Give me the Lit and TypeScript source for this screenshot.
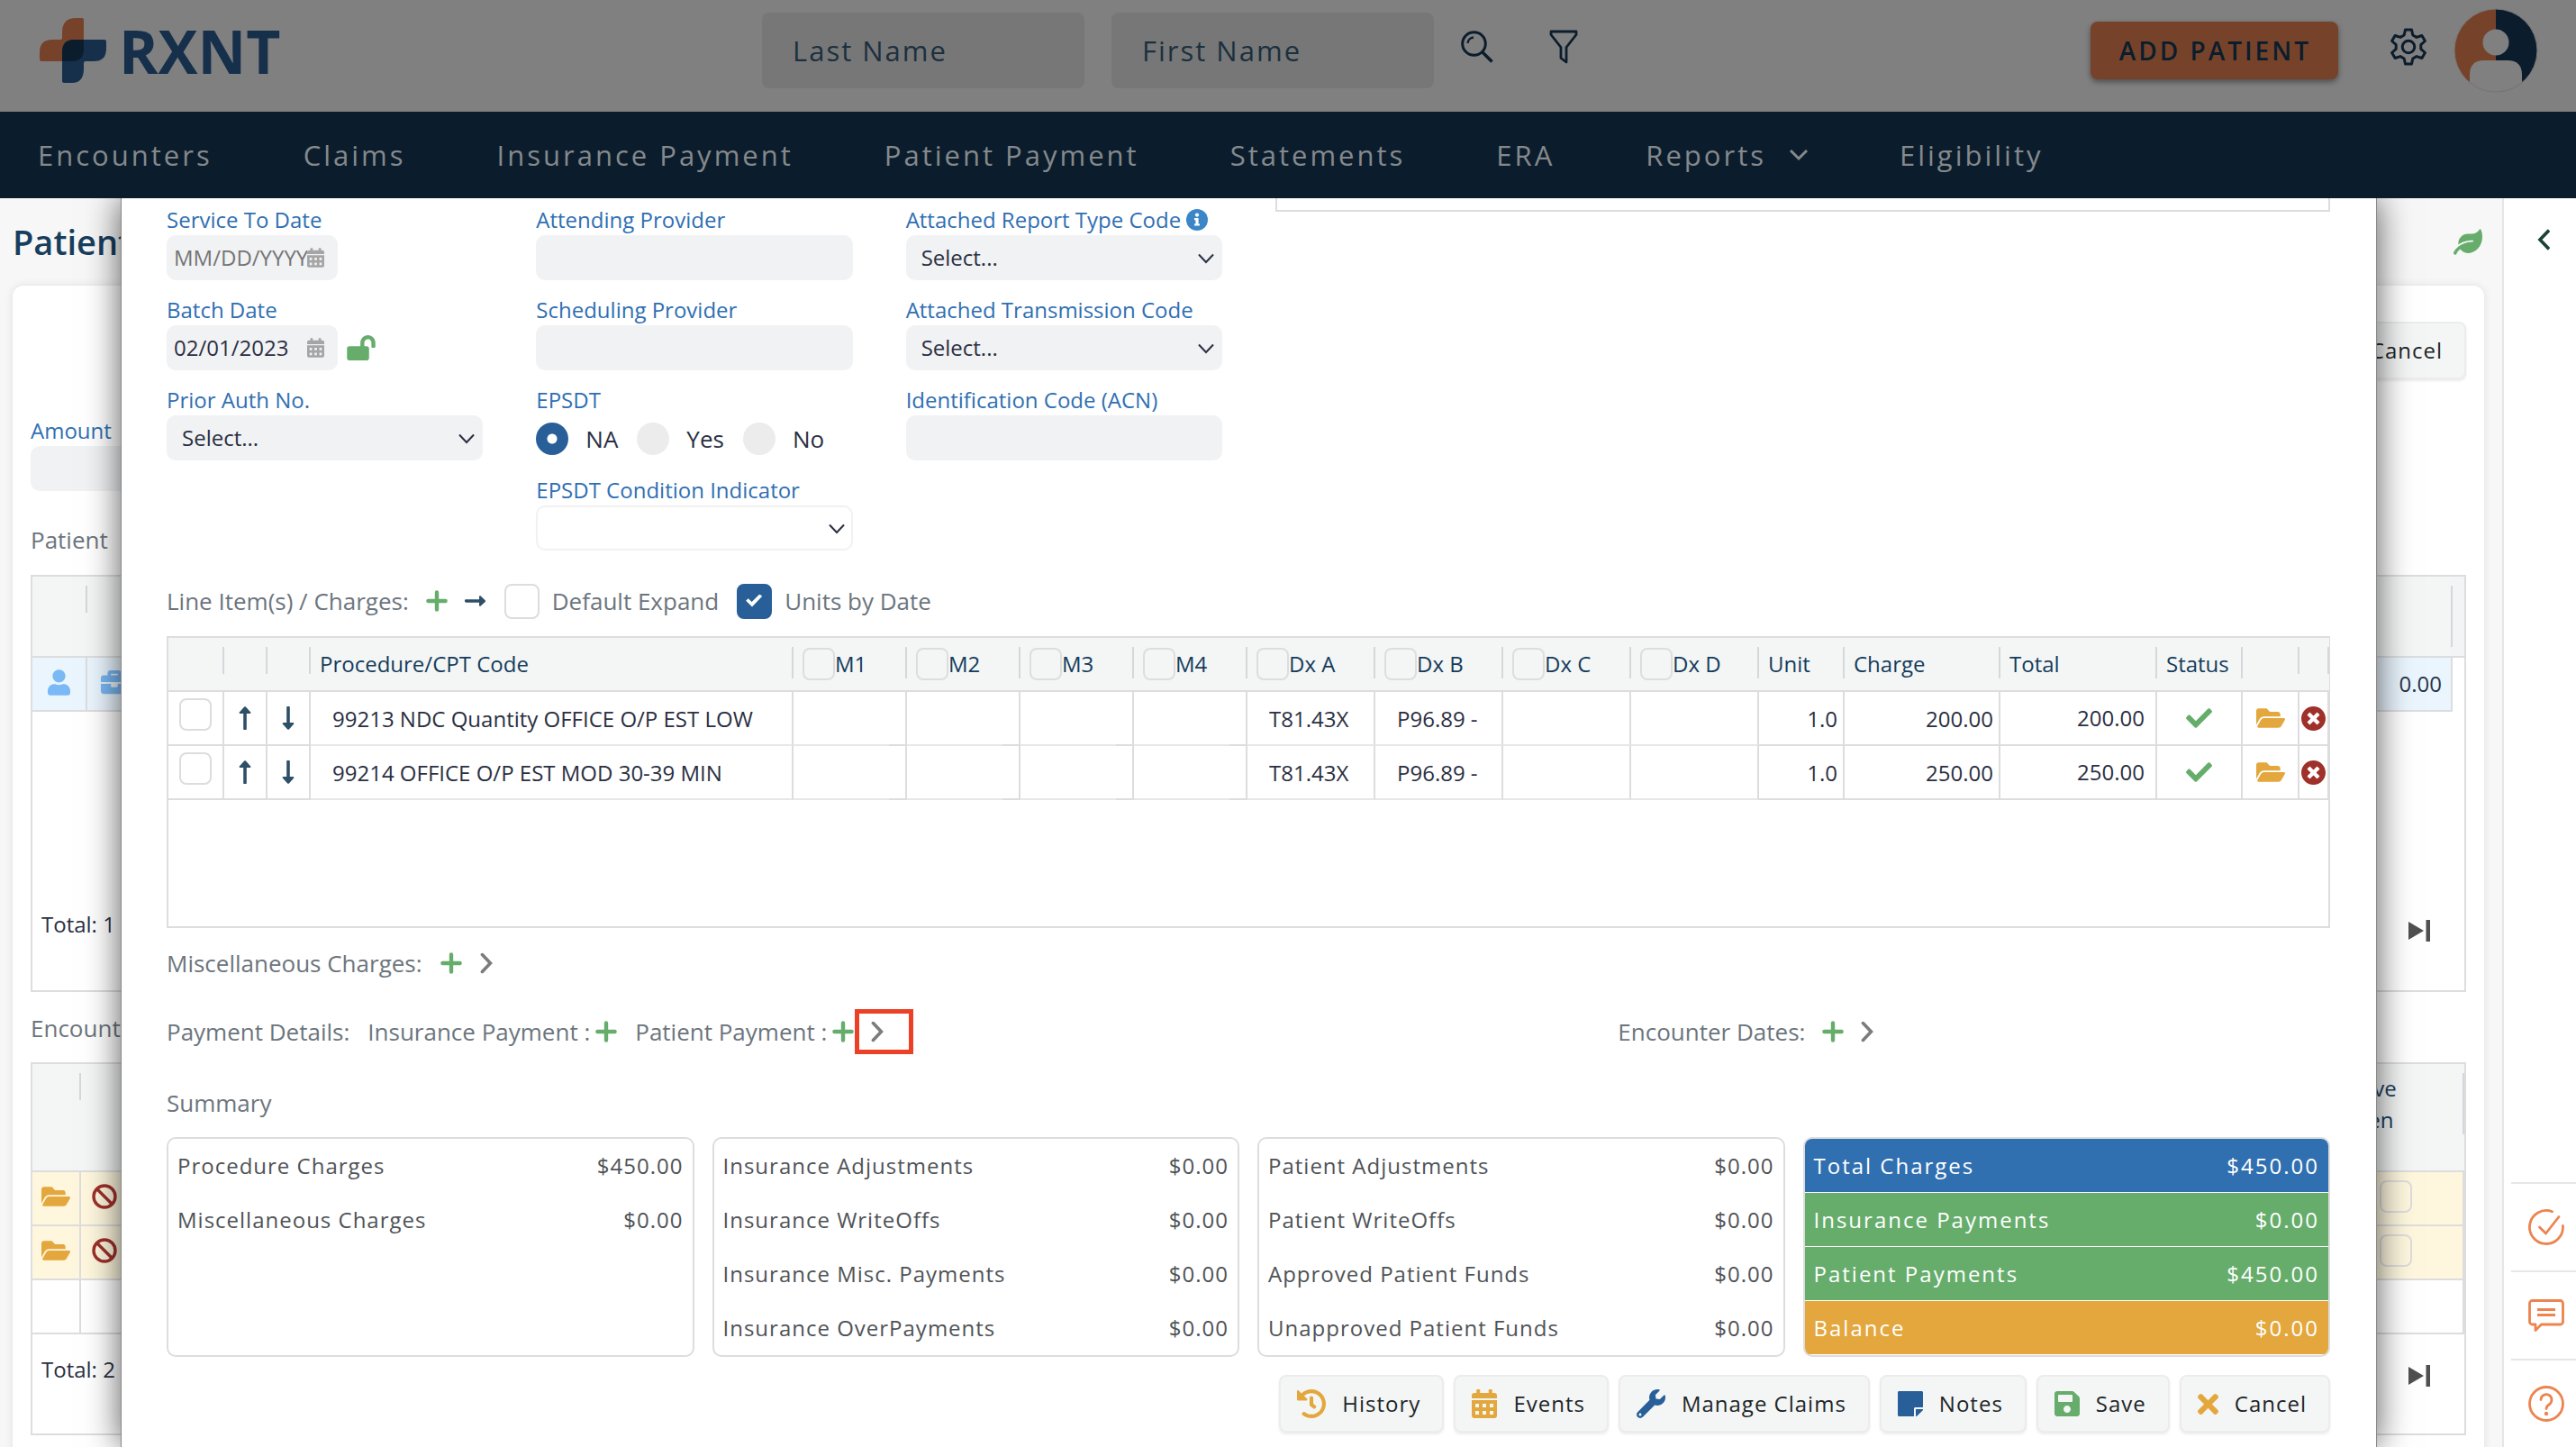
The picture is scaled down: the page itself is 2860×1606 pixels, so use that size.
import { LitElement, html, svg, css, nothing } from "lit";
import { customElement } from "lit/decorators.js";

type Glyph = { box: string; art: unknown };

const calendarArt = svg`<path fill-rule="evenodd" d="M96 0h40a12 12 0 0 1 12 12v52h152V12a12 12 0 0 1 12-12h40a12 12 0 0 1 12 12v52h36a48 48 0 0 1 48 48v48H0v-48a48 48 0 0 1 48-48h36V12a12 12 0 0 1 12-12zM0 192h448v272a48 48 0 0 1-48 48H48a48 48 0 0 1-48-48zM64 256v64h64v-64zM192 256v64h64v-64zM320 256v64h64v-64zM64 384v64h64v-64zM192 384v64h64v-64zM320 384v64h64v-64z"/>`;

const glyphs: Record<string, Glyph> = {
  plus: { box: "0 0 24 24", art: svg`<path fill="none" stroke="currentColor" stroke-width="4.4" stroke-linecap="round" d="M12 2.4v19.2M2.4 12h19.2"/>` },
  chevron: { box: "0 0 14 24", art: svg`<path fill="none" stroke="currentColor" stroke-width="3.6" stroke-linecap="round" d="M2.4 2.6L11.4 12l-9 9.4"/>` },
  back: { box: "0 0 14 24", art: svg`<path fill="none" stroke="currentColor" stroke-width="3.6" d="M13 1.6L3 12l10 10.4"/>` },
  down: { box: "0 0 22 14", art: svg`<path fill="none" stroke="currentColor" stroke-width="3" d="M2 2l9 9 9-9"/>` },
  caret: { box: "0 0 18 12", art: svg`<path fill="none" stroke="currentColor" stroke-width="2" d="M1 1.5l8 8.500 8-8.500"/>` },
  expand: { box: "0 0 24 12", art: svg`<path fill="currentColor" d="M1.500 4.200H16V1.200c0-1 1-1.200 1.700-.6l5 4.600c.5.5.5 1.200 0 1.700l-5 4.600c-.7.6-1.700.3-1.700-.6V7.800H1.500C.6 7.800 0 7.400 0 6.600V5.400c0-.7.600-1.200 1.500-1.200z"/>` },
  up: { box: "0 0 14 26", art: svg`<path fill="currentColor" d="M5.200 25V8H2C.6 8 .2 7 1 6.200L6.200.6c.5-.5 1.200-.5 1.700 0L13 6.200c.8.800.4 1.800-1 1.800H8.800v17c0 .6-.3 1-1 1H6.200c-.7 0-1-.4-1-1z"/>` },
  downArrow: { box: "0 0 14 26", art: svg`<path fill="currentColor" d="M5.200 1v17H2c-1.400 0-1.800 1-1 1.800l5.200 5.600c.5.5 1.200.5 1.700 0L13 19.800c.8-.8.4-1.800-1-1.800H8.800V1c0-.6-.3-1-1-1H6.200c-.7 0-1 .4-1 1z"/>` },
  search: { box: "0 0 36 36", art: svg`<g fill="none" stroke="currentColor" stroke-width="3"><circle cx="14.500" cy="14.500" r="12.800"/><path d="M23.500 23.500l11 11" stroke-width="3.600"/><path d="M7.500 14a7 7 0 0 1 6.500-6.500" stroke-width="2.400"/></g>` },
  filter: { box: "0 0 32 38", art: svg`<path fill="none" stroke="currentColor" stroke-width="2.800" stroke-linejoin="round" d="M2 2h28v3.500L19 19.500V36l-6-4.500v-12L2 5.500z"/>` },
  gear: { box: "0 0 40 42", art: svg`<g fill="none" stroke="currentColor" stroke-width="3" stroke-linejoin="round"><path d="M16.500 2h7l1.300 6 4.200 2.400 5.900-1.900 3.500 6-4.600 4.100v4.800l4.600 4.100-3.500 6-5.900-1.900-4.200 2.400-1.300 6h-7l-1.300-6-4.200-2.400-5.900 1.900-3.500-6 4.600-4.100v-4.800l-4.600-4.100 3.500-6 5.900 1.900L15.200 8z"/><circle cx="20" cy="21" r="6.800"/></g>` },
  user: { box: "0 0 448 512", art: svg`<path fill="currentColor" d="M224 256c70.700 0 128-57.300 128-128S294.700 0 224 0 96 57.300 96 128s57.300 128 128 128zm89.600 32h-16.700c-22.200 10.200-46.900 16-72.900 16s-50.600-5.800-72.900-16h-16.700C60.200 288 0 348.200 0 422.400V464c0 26.500 21.500 48 48 48h352c26.500 0 48-21.500 48-48v-41.600c0-74.200-60.200-134.400-134.400-134.400z"/>` },
  briefcase: { box: "0 0 512 512", art: svg`<path fill="currentColor" d="M320 336c0 8.840-7.160 16-16 16h-96c-8.840 0-16-7.160-16-16v-48H0v144c0 25.600 22.400 48 48 48h416c25.600 0 48-22.400 48-48V288H320v48zm144-208h-80V80c0-25.600-22.400-48-48-48H176c-25.600 0-48 22.400-48 48v48H48c-25.600 0-48 22.400-48 48v80h512v-80c0-25.600-22.400-48-48-48zm-144 0H192V96h128v32z"/>` },
  leaf: { box: "0 0 576 512", art: svg`<path fill="currentColor" d="M546.200 9.700c-5.600-12.500-21.600-13-28.300-1.200C486.900 62.400 431.400 96 368 96h-80C182 96 96 182 96 288c0 7 .8 13.700 1.500 20.500C161.300 262.800 253.400 224 384 224c8.800 0 16 7.200 16 16s-7.200 16-16 16C132.600 256 26 410.100 2.400 468c-6.600 16.300 1.200 34.900 17.500 41.600 16.400 6.800 35-1.100 41.800-17.300 1.500-3.600 20.900-47.900 71.900-90.600 32.400 43.900 94 85.800 174.900 77.200C465.500 467.500 576 326.700 576 154.300c0-50.200-10.800-102.200-29.800-144.600z"/>` },
  lockOpen: { box: "0 0 576 512", art: svg`<path fill="currentColor" d="M423.500 0C339.500.3 272 69.500 272 153.500V224H48c-26.500 0-48 21.500-48 48v192c0 26.500 21.500 48 48 48h352c26.500 0 48-21.500 48-48V272c0-26.500-21.500-48-48-48h-48v-71.100c0-39.600 31.700-72.500 71.300-72.900 40-.4 72.700 32.100 72.700 72v80c0 13.300 10.700 24 24 24h32c13.300 0 24-10.700 24-24v-80C576 68 507.500-.3 423.500 0z"/>` },
  folder: { box: "0 64 576 384", art: svg`<path fill="currentColor" d="M572.694 292.093L500.270 416.248A63.997 63.997 0 0 1 444.989 448H45.025c-18.523 0-30.064-20.093-20.731-36.093l72.424-124.155A64 64 0 0 1 152 256h399.964c18.523 0 30.064 20.093 20.730 36.093zM152 224h328v-48c0-26.510-21.490-48-48-48H272l-64-64H48C21.490 64 0 85.490 0 112v278.046l69.077-118.418C86.214 242.250 117.989 224 152 224z"/>` },
  check: { box: "0 65 512 382", art: svg`<path fill="currentColor" d="M173.898 439.404l-166.400-166.400c-9.997-9.997-9.997-26.206 0-36.204l36.203-36.204c9.997-9.998 26.207-9.998 36.204 0L192 312.690 432.095 72.596c9.997-9.997 26.207-9.997 36.204 0l36.203 36.204c9.997 9.997 9.997 26.206 0 36.204l-294.400 294.401c-9.998 9.997-26.207 9.997-36.204-.001z"/>` },
  remove: { box: "8 8 496 496", art: svg`<path fill="currentColor" d="M256 8C119 8 8 119 8 256s111 248 248 248 248-111 248-248S393 8 256 8zm121.600 313.100c4.700 4.700 4.700 12.300 0 17L338 377.600c-4.700 4.700-12.300 4.700-17 0L256 312l-65.100 65.600c-4.700 4.700-12.300 4.700-17 0L134.400 338c-4.700-4.700-4.700-12.300 0-17l65.600-65-65.600-65.100c-4.700-4.700-4.700-12.300 0-17l39.600-39.600c4.700-4.700 12.300-4.700 17 0l65 65.700 65.100-65.600c4.700-4.700 12.300-4.700 17 0l39.600 39.600c4.700 4.700 4.700 12.300 0 17L312 256l65.600 65.100z"/>` },
  ban: { box: "0 0 28 28", art: svg`<g fill="none" stroke="currentColor" stroke-width="3.400"><circle cx="14" cy="14" r="12"/><path d="M5.500 5.500l17 17"/></g>` },
  info: { box: "0 0 24 24", art: svg`<circle cx="12" cy="12" r="12" fill="currentColor"/><circle cx="12" cy="6.600" r="2.100" fill="#fff"/><path fill="#fff" d="M9 10h4.600v6.400H15v2.200H9v-2.200h1.400v-4.200H9z"/>` },
  calendar: { box: "0 0 448 512", art: svg`<g fill="currentColor">${calendarArt}</g>` },
  history: { box: "8 8 496 496", art: svg`<path fill="currentColor" d="M504 255.531c.253 136.640-111.180 248.372-247.820 248.468-59.015.042-113.223-20.530-155.822-54.911-11.077-8.940-11.905-25.541-1.839-35.607l11.267-11.267c8.609-8.609 22.353-9.551 31.891-1.984C173.062 425.135 212.781 440 256 440c101.705 0 184-82.311 184-184 0-101.705-82.311-184-184-184-48.814 0-93.149 18.969-126.068 49.932l50.754 50.754c10.080 10.080 2.941 27.314-11.313 27.314H24c-8.837 0-16-7.163-16-16V38.627c0-14.254 17.234-21.393 27.314-11.314l49.372 49.372C129.209 34.136 189.552 8 256 8c136.810 0 247.747 110.780 248 247.531zm-180.912 78.784l9.823-12.630c8.138-10.463 6.253-25.542-4.210-33.679L288 256.349V152c0-13.255-10.745-24-24-24h-16c-13.255 0-24 10.745-24 24v135.651l65.409 50.874c10.463 8.137 25.541 6.253 33.679-4.210z"/>` },
  wrench: { box: "0 0 512 512", art: svg`<path fill="currentColor" d="M507.730 109.100c-2.240-9.030-13.540-12.090-20.120-5.510l-74.360 74.360-67.880-11.310-11.310-67.880 74.360-74.360c6.620-6.620 3.430-17.900-5.660-20.160-47.380-11.740-99.550.91-136.580 37.930-39.640 39.640-50.550 97.100-34.050 147.200L18.740 402.760c-24.990 24.990-24.990 65.510 0 90.500 24.990 24.990 65.510 24.990 90.500 0l213.210-213.210c50.120 16.710 107.470 5.680 147.370-34.220 37.070-37.070 49.700-89.320 37.910-136.730zM64 472c-13.250 0-24-10.750-24-24 0-13.260 10.750-24 24-24s24 10.740 24 24c0 13.250-10.750 24-24 24z"/>` },
  note: { box: "0 32 448 448", art: svg`<path fill="currentColor" d="M312 320h136V56c0-13.300-10.700-24-24-24H24C10.700 32 0 42.700 0 56v400c0 13.300 10.700 24 24 24h264V344c0-13.200 10.800-24 24-24zm129 55l-98 98c-4.500 4.500-10.600 7-17 7h-6V352h128v6.100c0 6.300-2.500 12.400-7 16.900z"/>` },
  save: { box: "0 32 448 448", art: svg`<path fill="currentColor" d="M433.941 129.941l-83.882-83.882A48 48 0 0 0 316.118 32H48C21.490 32 0 53.490 0 80v352c0 26.510 21.490 48 48 48h352c26.510 0 48-21.490 48-48V163.882a48 48 0 0 0-14.059-33.941zM224 416c-35.346 0-64-28.654-64-64 0-35.346 28.654-64 64-64s64 28.654 64 64c0 35.346-28.654 64-64 64zm96-304.520V212c0 6.627-5.373 12-12 12H76c-6.627 0-12-5.373-12-12V108c0-6.627 5.373-12 12-12h228.520c3.183 0 6.235 1.264 8.485 3.515l3.480 3.480A11.996 11.996 0 0 1 320 111.480z"/>` },
  times: { box: "0 80 352 352", art: svg`<path fill="currentColor" d="M242.720 256l100.070-100.070c12.280-12.280 12.280-32.190 0-44.480l-22.240-22.240c-12.280-12.280-32.190-12.280-44.480 0L176 189.280 75.930 89.210c-12.280-12.280-32.190-12.280-44.480 0L9.210 111.450c-12.280 12.280-12.280 32.190 0 44.480L109.280 256 9.210 356.070c-12.280 12.280-12.280 32.190 0 44.480l22.240 22.240c12.280 12.280 32.200 12.280 44.480 0L176 322.720l100.070 100.070c12.280 12.280 32.200 12.280 44.480 0l22.240-22.240c12.280-12.280 12.280-32.190 0-44.480L242.720 256z"/>` },
  last: { box: "0 0 24 24", art: svg`<path fill="currentColor" d="M0 2l17 10L0 22zM19.500 0H24v24h-4.500z"/>` },
  task: { box: "0 0 40 40", art: svg`<g fill="none" stroke="currentColor" stroke-width="2.800" stroke-linecap="round"><path d="M38.400 18.500A18.500 18.500 0 1 1 26.500 2.700"/><path d="M12.500 20l7 7L34 8.500"/></g>` },
  message: { box: "0 0 40 36", art: svg`<path fill="none" stroke="currentColor" stroke-width="2.800" stroke-linejoin="round" d="M4.500 1.500h31a3 3 0 0 1 3 3V25a3 3 0 0 1-3 3H14.500L8 34.500V28H4.500a3 3 0 0 1-3-3V4.500a3 3 0 0 1 3-3z"/><path stroke="currentColor" stroke-width="3.200" d="M10 11.500h20M10 17.500h20"/>` },
  help: { box: "0 0 40 40", art: svg`<g fill="none" stroke="currentColor" stroke-width="2.800" stroke-linecap="round"><circle cx="20" cy="20" r="18.500"/><path d="M14 15.500a6 6 0 1 1 9.500 5c-2.500 1.700-3.500 2.600-3.500 5"/></g><circle cx="20" cy="31" r="2.200" fill="currentColor"/>` },
};

const icon = (name: string, width: number, height: number, tone = "") => html`
  <svg class="icon ${tone}" width=${width} height=${height} viewBox=${glyphs[name].box} aria-hidden="true">${glyphs[name].art}</svg>`;

const shared = css`
  * { box-sizing: border-box; }
  :host { font-family: "Open Sans", "Noto Sans", sans-serif; font-size: 24px; line-height: 32px; color: #2b2f42; }
  .icon { display: block; flex: none; }
  .green { color: #66ad6c; }
  .amber { color: #e3a73d; }
  .blue { color: #285f98; }
  .red { color: #9f302a; }
  .slate { color: #2e4f68; }
  .grey { color: #7c7c7c; }
  button, input, select { font: inherit; color: inherit; margin: 0; }
  button { border: 0; padding: 0; background: none; cursor: pointer; }
  .section { margin: 0; font-size: 26px; line-height: 40px; font-weight: 400; color: #6c757d; }
  .control { display: block; width: 100%; height: 50px; border: 0; border-radius: 10px; background: #f1f2f4; outline: none; }
  .label { display: flex; align-items: center; gap: 6px; height: 32px; color: #2f6fb2; line-height: 30px; padding-bottom: 2px; white-space: nowrap; }
  .tick { appearance: none; display: block; flex: none; width: 36px; height: 36px; border: 2px solid #dddddd; border-radius: 8px; background: transparent; }
  .action { display: flex; align-items: center; gap: 18px; height: 64px; padding: 0 24px 0 18px; border: 2px solid #ececec; border-radius: 8px; background: #f4f6f5; box-shadow: 0 2px 3px rgba(0, 0, 0, 0.08); color: #212529; letter-spacing: 1px; }
  table { border-collapse: separate; border-spacing: 0; table-layout: fixed; width: 100%; }
  th, td { padding: 0; font-weight: 400; text-align: left; overflow: hidden; white-space: nowrap; }
`;

@customElement("site-header")
export class SiteHeader extends LitElement {
  static styles = [shared, css`
    :host { display: block; flex: none; }
    .bar { display: flex; align-items: center; height: 124px; padding: 0 42px 12px 44px; background: #808080; color: #0b1d2c; }
    .brand { display: flex; align-items: center; gap: 14px; flex: 0 1 802px; font-size: 66px; line-height: 72px; font-weight: 700; color: #16304b; text-decoration: none; }
    .query { width: 358px; height: 84px; margin-right: 30px; padding: 0 34px; border: 0; border-radius: 8px; background: #777777; font-size: 31px; letter-spacing: 2px; }
    .query::placeholder { color: #1b303f; opacity: 1; }
    .tool { padding-bottom: 8px; }
    .tools { display: flex; gap: 62px; }
    .right { display: flex; align-items: center; margin-left: auto; }
    .add { height: 64px; padding: 0 30px 0 32px; border-radius: 8px; background: #76432a; box-shadow: 0 3px 6px rgba(0, 0, 0, 0.4); font-size: 28px; font-weight: 600; letter-spacing: 3px; }
    .settings { margin: 0 30px 0 58px; }
    .nav { display: flex; align-items: center; gap: 101px; height: 96px; padding: 0 42px; background: #0b1d2c; }
    .link { display: flex; align-items: center; gap: 25px; color: #85898c; font-size: 31px; letter-spacing: 3px; text-decoration: none; white-space: nowrap; }
  `];

  render() {
    const links = ["Encounters", "Claims", "Insurance Payment", "Patient Payment", "Statements", "ERA", "Reports", "Eligibility"];
    return html`
      <header class="bar">
        <a class="brand" href="#home">
          <svg class="icon" width="74" height="72" viewBox="0 0 74 72" aria-hidden="true">
            <path fill="#76432a" d="M0 46V38Q0 24 14 24H23Q25 24 25 22V16Q25 0 40 0H47Q49 0 49 2V34Q49 48 36 48H2Q0 48 0 46Z"/>
            <path fill="#16304b" d="M25 38Q25 24 38 24H72Q74 24 74 26V34Q74 48 60 48H51Q49 48 49 50V56Q49 72 36 72H27Q25 72 25 70Z"/>
            <path fill="#0b1d2c" d="M25 38Q25 24 38 24H47Q49 24 49 26V34Q49 48 36 48H25Z"/>
          </svg>
          RXNT
        </a>
        <input class="query" type="text" placeholder="Last Name" aria-label="Last Name">
        <input class="query" type="text" placeholder="First Name" aria-label="First Name">
        <div class="tools">
          <button class="tool" aria-label="Search">${icon("search", 36, 36)}</button>
          <button class="tool" aria-label="Filter">${icon("filter", 32, 38)}</button>
        </div>
        <div class="right">
          <button class="add">ADD PATIENT</button>
          <button class="tool settings" aria-label="Settings">${icon("gear", 40, 42)}</button>
          <button aria-label="Account">
            <svg class="icon" width="94" height="94" viewBox="0 0 94 94" aria-hidden="true">
              <clipPath id="disc"><circle cx="47" cy="47" r="46"/></clipPath>
              <g clip-path="url(#disc)">
                <rect width="47" height="94" fill="#76432a"/>
                <rect x="47" width="47" height="94" fill="#0b1d2c"/>
                <circle cx="47" cy="38" r="14.500" fill="#808080"/>
                <path fill="#808080" d="M18 94V74Q18 58 34 58H60Q76 58 76 74V94Z"/>
              </g>
              <circle cx="47" cy="47" r="46" fill="none" stroke="#777777"/>
            </svg>
          </button>
        </div>
      </header>
      <nav class="nav">
        ${links.map((text) => html`<a class="link" href="#${text}">${text}${text === "Reports" ? icon("down", 22, 14) : nothing}</a>`)}
      </nav>`;
  }
}

@customElement("patient-page")
export class PatientPage extends LitElement {
  static styles = [shared, css`
    :host { display: flex; }
    .workspace { flex: 1; min-width: 0; display: flex; flex-direction: column; padding: 0 20px 0 14px; background: #f7f7f7; border-right: 2px solid #e6e6e6; }
    .title-row { display: flex; flex: none; align-items: center; justify-content: space-between; height: 97px; padding-right: 2px; }
    .title { margin: 0; font-size: 38px; line-height: 48px; padding-bottom: 2px; font-weight: 600; color: #183e5e; }
    .card { flex: 1; padding: 40px 20px 0; border-radius: 12px 12px 0 0; background: #ffffff; box-shadow: 0 0 10px rgba(0, 0, 0, 0.1); }
    .toolbar { display: flex; justify-content: flex-end; margin-bottom: 42px; }
    .amount { width: 350px; margin-bottom: 34px; }
    .grid { display: flex; flex-direction: column; justify-content: space-between; margin: 19px 0 20px; border: 2px solid #dddddd; }
    .patients { height: 463px; }
    .encounters { height: 414px; margin-top: 18px; }
    th { background: linear-gradient(#d5d7da, #d5d7da) no-repeat right top 10px / 2px 30px #f4f5f5; border-bottom: 2px solid #dddddd; color: #183e5e; vertical-align: top; }
    .patients th { height: 90px; }
    .encounters th { height: 120px; }
    .tall { background-size: 2px 68px; }
    .wrap { padding: 9px 10px; line-height: 35px; white-space: normal; }
    .gutter { background: #f3f4f6; }
    td { height: 60px; border-right: 2px solid #dddddd; border-bottom: 2px solid #dddddd; vertical-align: middle; }
    td .icon, td .tick { margin: 0 auto 4px; }
    .picked td { background: #eaf5fe; color: #2b3446; }
    .picked .none, .none { border: 0; background: none; }
    .sky { color: #7ab9f5; }
    .marked td { background: #fef7de; }
    .money { padding-right: 10px; text-align: right; }
    .foot { display: flex; justify-content: space-between; height: 112px; padding: 23px 38px 0 10px; }
    .next { align-self: flex-start; padding-top: 11px; color: #505050; }
    .side { display: flex; flex: none; flex-direction: column; width: 80px; padding-left: 8px; background: #ffffff; color: #ec8450; }
    .fold { align-self: center; margin-top: 34px; color: #1b4433; }
    .fill { flex: 1; }
    .shortcut { display: flex; align-items: center; justify-content: center; height: 98px; padding-left: 6px; border-top: 2px solid #e6e6e6; }
  `];

  render() {
    return html`
      <main class="workspace">
        <div class="title-row"><h1 class="title">Patient</h1>${icon("leaf", 32, 29, "green")}</div>
        <section class="card">
          <div class="toolbar"><button class="action">Cancel</button></div>
          <div class="amount">
            <label class="label" for="amount">Amount</label>
            <input class="control" id="amount" type="text">
          </div>
          <h2 class="section">Patient</h2>
          <div class="grid patients">
            <table>
              <colgroup><col style="width:61px"><col style="width:61px"><col><col style="width:180px"><col style="width:13px"></colgroup>
              <thead><tr><th></th><th></th><th></th><th class="tall"></th><th class="gutter"></th></tr></thead>
              <tbody><tr class="picked">
                <td>${icon("user", 25, 29, "sky")}</td><td>${icon("briefcase", 30, 30, "sky")}</td><td></td><td class="money">0.00</td><td class="none"></td>
              </tr></tbody>
            </table>
            <div class="foot"><span>Total: 1</span><button class="next" aria-label="Last page">${icon("last", 24, 24)}</button></div>
          </div>
          <h2 class="section">Encounters</h2>
          <div class="grid encounters">
            <table>
              <colgroup><col style="width:54px"><col style="width:54px"><col><col style="width:150px"></colgroup>
              <thead><tr><th></th><th></th><th></th><th class="tall wrap">Leave<br>Open</th></tr></thead>
              <tbody>
                ${[1, 2].map((row) => html`<tr class="marked">
                  <td>${icon("folder", 32, 22, "amber")}</td><td>${icon("ban", 28, 28, "red")}</td><td></td>
                  <td><input class="tick" type="checkbox" aria-label="Leave open ${row}"></td>
                </tr>`)}
                <tr><td></td><td></td><td></td><td></td></tr>
              </tbody>
            </table>
            <div class="foot"><span>Total: 2</span><button class="next" aria-label="Last page">${icon("last", 24, 24)}</button></div>
          </div>
        </section>
      </main>
      <aside class="side">
        <button class="fold" aria-label="Expand panel">${icon("back", 14, 24)}</button>
        <div class="fill"></div>
        <button class="shortcut" aria-label="Tasks">${icon("task", 40, 40)}</button>
        <button class="shortcut" aria-label="Messages">${icon("message", 40, 36)}</button>
        <button class="shortcut" aria-label="Help">${icon("help", 40, 40)}</button>
      </aside>`;
  }
}

const modifiers = ["M1", "M2", "M3", "M4"];
const diagnoses = ["Dx A", "Dx B", "Dx C", "Dx D"];
const columnWidths = [62, 48, 48, 536, 126, 126, 126, 126, 142, 142, 142, 142, 95, 173, 174, 95, 63, 33];

const charges = [
  { code: "99213 NDC Quantity OFFICE O/P EST LOW", dx: ["T81.43X", "P96.89 -", "", ""], unit: "1.0", amount: "200.00" },
  { code: "99214 OFFICE O/P EST MOD 30-39 MIN", dx: ["T81.43X", "P96.89 -", "", ""], unit: "1.0", amount: "250.00" },
];

const summary = [
  [["Procedure Charges", "$450.00"], ["Miscellaneous Charges", "$0.00"]],
  [["Insurance Adjustments", "$0.00"], ["Insurance WriteOffs", "$0.00"], ["Insurance Misc. Payments", "$0.00"], ["Insurance OverPayments", "$0.00"]],
  [["Patient Adjustments", "$0.00"], ["Patient WriteOffs", "$0.00"], ["Approved Patient Funds", "$0.00"], ["Unapproved Patient Funds", "$0.00"]],
];

const totals = [
  ["Total Charges", "$450.00", "charge"],
  ["Insurance Payments", "$0.00", "paid"],
  ["Patient Payments", "$450.00", "paid"],
  ["Balance", "$0.00", "due"],
];

@customElement("encounter-dialog")
export class EncounterDialog extends LitElement {
  static styles = [shared, css`
    :host { display: block; padding: 0 51px 0 50px; border: 1px solid #8a8a8a; border-width: 0 1px; background: #ffffff; box-shadow: 0 0 36px rgba(0, 0, 0, 0.65); overflow: hidden; }
    .form { display: grid; grid-template-columns: 3fr 3fr 3fr 10fr; gap: 59px; }
    .stack { display: flex; flex-direction: column; gap: 18px; padding-top: 9px; min-width: 0; }
    .panel { height: 15px; border: 2px solid #dddddd; border-top: 0; }
    .text { padding: 0 12px; }
    .pick { position: relative; display: block; }
    .pick .control { appearance: none; padding: 0 40px 0 17px; }
    .pick .icon { position: absolute; right: 9px; top: 20px; pointer-events: none; }
    .outlined { border: 2px solid #f1f1f1; background: #ffffff; }
    .line { display: flex; align-items: center; gap: 10px; }
    .date { display: flex; align-items: center; width: 190px; height: 50px; padding: 0 15px 0 8px; border-radius: 10px; background: #f1f2f4; }
    .date input { flex: 1; min-width: 0; width: 0; padding: 0; border: 0; background: none; outline: none; }
    .date input::placeholder { color: #757575; opacity: 1; }
    .mist { color: #a5a5a5; }
    .sky { color: #3b86c8; }
    .choices { display: flex; align-items: center; height: 50px; padding-top: 2px; font-size: 26px; }
    .choice { display: flex; align-items: center; gap: 19px; margin-right: 21px; }
    .radio { appearance: none; width: 36px; height: 36px; border-radius: 50%; background: #ececec; }
    .radio:checked { background: radial-gradient(#ffffff 5px, #285f98 6px); }
    .heading { display: flex; align-items: center; height: 40px; color: #6c757d; font-size: 26px; white-space: nowrap; }
    .items { margin-top: 36px; }
    .items .icon { margin-left: 19px; }
    .option { display: flex; align-items: center; gap: 14px; margin-left: 20px; }
    .option .tick { width: 39px; height: 39px; }
    .tick:checked { border-color: #285f98; background: #285f98; }
    .tick:checked::before { content: ""; display: block; width: 18px; height: 14px; margin: 10px 8px; background: #ffffff; clip-path: polygon(0 52%, 14% 34%, 36% 60%, 84% 0, 100% 16%, 38% 100%); }
    .ledger { min-height: 324px; margin-top: 19px; border: 2px solid #dddddd; }
    th { height: 60px; padding-left: 10px; border-bottom: 2px solid #dddddd; background: linear-gradient(#d5d7da, #d5d7da) no-repeat right top 10px / 2px 35px #f4f6f5; color: #153c5c; }
    .short { background-size: 2px 30px; }
    .head-tick { display: flex; align-items: center; }
    td { height: 60px; border-right: 2px solid #dddddd; border-bottom: 2px solid #dddddd; }
    td .icon, td button { margin: 0 auto; display: block; }
    td .tick { margin: 0 auto 8px; }
    .editable { border-bottom-color: #e7e7e7; }
    .notched { border-bottom: 0; background: linear-gradient(#dddddd, #dddddd) no-repeat right bottom / 18px 2px, linear-gradient(#e7e7e7, #e7e7e7) no-repeat left bottom / 100% 2px; }
    .cell { display: block; width: 100%; height: 56px; padding: 0 24px; border: 0; background: none; outline: none; }
    .number { padding: 0 6px; text-align: right; }
    .total { padding-right: 12px; text-align: right; }
    .misc { margin-top: 19px; gap: 20px; }
    .payments { display: grid; grid-template-columns: 2fr 1fr; margin-top: 31px; }
    .payments .heading { height: 50px; }
    .part { display: flex; align-items: center; gap: 6px; margin-left: 20px; }
    .flagged { display: flex; align-items: center; width: 65px; height: 50px; margin-left: 1px; padding-left: 13px; border: 5px solid #ec4126; }
    .dates { gap: 19px; padding-left: 10px; }
    .section { margin-top: 34px; }
    .boxes { display: grid; grid-template-columns: repeat(4, 1fr); gap: 20px; margin-top: 18px; }
    .box { margin: 0; border: 2px solid #dddddd; border-radius: 10px; overflow: hidden; letter-spacing: 1px; color: #4f5357; }
    .entry { display: flex; align-items: center; justify-content: space-between; height: 60px; padding: 0 10px; }
    .entry dd { margin: 0; }
    .tinted { color: #ffffff; letter-spacing: 2px; }
    .tinted .entry { border-bottom: 1px solid #ffffff; }
    .charge { background: #306fb0; }
    .paid { background: #66ad6c; }
    .due { background: #e3a73d; }
    .actions { display: flex; justify-content: flex-end; gap: 11px; margin-top: 20px; }
  `];

  private input(id: string, label: string) {
    return html`<div><label class="label" for=${id}>${label}</label><input class="control text" id=${id} type="text"></div>`;
  }

  private select(id: string, label: string, value = "Select...", tone = "", hint: unknown = nothing) {
    return html`<div>
      <label class="label" for=${id}>${label}${hint}</label>
      <span class="pick"><select class="control ${tone}" id=${id}><option>${value}</option></select>${icon("caret", 18, 12)}</span>
    </div>`;
  }

  private date(id: string, label: string, value: string, extra: unknown = nothing) {
    return html`<div>
      <label class="label" for=${id}>${label}</label>
      <div class="line">
        <span class="date"><input id=${id} type="text" placeholder="MM/DD/YYYY" .value=${value}>${icon("calendar", 19, 22, "mist")}</span>
        ${extra}
      </div>
    </div>`;
  }

  private add(label: string) {
    return html`<button aria-label=${label}>${icon("plus", 24, 24, "green")}</button>`;
  }

  private tickHead(text: string) {
    return html`<th><label class="head-tick"><input class="tick" type="checkbox">${text}</label></th>`;
  }

  private action(text: string, name: string, w: number, h: number, tone: string) {
    return html`<button class="action">${icon(name, w, h, tone)}${text}</button>`;
  }

  render() {
    return html`
      <div class="form">
        <div class="stack">
          ${this.date("to-date", "Service To Date", "")}
          ${this.date("batch-date", "Batch Date", "02/01/2023", icon("lockOpen", 32, 28, "green"))}
          ${this.select("prior-auth", "Prior Auth No.")}
        </div>
        <div class="stack">
          ${this.input("attending", "Attending Provider")}
          ${this.input("scheduling", "Scheduling Provider")}
          <div role="radiogroup" aria-labelledby="epsdt">
            <span class="label" id="epsdt">EPSDT</span>
            <div class="choices">
              ${["NA", "Yes", "No"].map((text) => html`<label class="choice"><input class="radio" type="radio" name="epsdt" ?checked=${text === "NA"}>${text}</label>`)}
            </div>
          </div>
          ${this.select("condition", "EPSDT Condition Indicator", "", "outlined")}
        </div>
        <div class="stack">
          ${this.select("report-type", "Attached Report Type Code", "Select...", "", icon("info", 24, 24, "sky"))}
          ${this.select("transmission", "Attached Transmission Code")}
          ${this.input("acn", "Identification Code (ACN)")}
        </div>
        <div class="panel"></div>
      </div>

      <div class="heading items">
        Line Item(s) / Charges:
        ${this.add("Add line item")}
        <button aria-label="Expand line items">${icon("expand", 24, 12, "slate")}</button>
        <label class="option"><input class="tick" type="checkbox">Default Expand</label>
        <label class="option"><input class="tick" type="checkbox" checked>Units by Date</label>
      </div>

      <div class="ledger">
        <table>
          <colgroup>${columnWidths.map((w) => html`<col style="width:${w}px">`)}</colgroup>
          <thead><tr>
            <th class="short"></th><th class="short"></th><th class="short"></th><th>Procedure/CPT Code</th>
            ${[...modifiers, ...diagnoses].map((text) => this.tickHead(text))}
            <th>Unit</th><th>Charge</th><th>Total</th><th>Status</th><th class="short"></th><th class="short"></th>
          </tr></thead>
          <tbody>
            ${charges.map((row) => html`<tr>
              <td><input class="tick" type="checkbox" aria-label=${row.code}></td>
              <td><button aria-label="Move up">${icon("up", 14, 26, "slate")}</button></td>
              <td><button aria-label="Move down">${icon("downArrow", 14, 26, "slate")}</button></td>
              <td class="editable"><input class="cell" type="text" aria-label="Procedure" .value=${row.code}></td>
              ${modifiers.map((name) => html`<td class="notched"><input class="cell" type="text" aria-label=${name}></td>`)}
              ${diagnoses.map((name, i) => html`<td class="editable"><input class="cell" type="text" aria-label=${name} .value=${row.dx[i]}></td>`)}
              <td><input class="cell number" type="text" aria-label="Unit" .value=${row.unit}></td>
              <td><input class="cell number" type="text" aria-label="Charge" .value=${row.amount}></td>
              <td class="total">${row.amount}</td>
              <td>${icon("check", 29, 22, "green")}</td>
              <td><button aria-label="Open">${icon("folder", 32, 22, "amber")}</button></td>
              <td><button aria-label="Remove">${icon("remove", 27, 27, "red")}</button></td>
            </tr>`)}
          </tbody>
        </table>
      </div>

      <div class="heading misc">
        Miscellaneous Charges:
        ${this.add("Add miscellaneous charge")}
        <button aria-label="Expand">${icon("chevron", 14, 24, "grey")}</button>
      </div>

      <div class="payments">
        <div class="heading">
          Payment Details:
          <span class="part">Insurance Payment : ${this.add("Add insurance payment")}</span>
          <span class="part">Patient Payment : ${this.add("Add patient payment")}</span>
          <button class="flagged" aria-label="Expand payments">${icon("chevron", 14, 24, "grey")}</button>
        </div>
        <div class="heading dates">
          Encounter Dates:
          ${this.add("Add encounter date")}
          <button aria-label="Expand dates">${icon("chevron", 14, 24, "grey")}</button>
        </div>
      </div>

      <h2 class="section">Summary</h2>
      <div class="boxes">
        ${summary.map((rows) => html`<dl class="box">${rows.map(([name, value]) => html`<div class="entry"><dt>${name}</dt><dd>${value}</dd></div>`)}</dl>`)}
        <dl class="box tinted">${totals.map(([name, value, tone]) => html`<div class="entry ${tone}"><dt>${name}</dt><dd>${value}</dd></div>`)}</dl>
      </div>

      <div class="actions">
        ${this.action("History", "history", 32, 32, "amber")}
        ${this.action("Events", "calendar", 28, 32, "amber")}
        ${this.action("Manage Claims", "wrench", 32, 32, "blue")}
        ${this.action("Notes", "note", 28, 28, "blue")}
        ${this.action("Save", "save", 28, 28, "green")}
        ${this.action("Cancel", "times", 23, 23, "amber")}
      </div>`;
  }
}

@customElement("app-root")
export class AppRoot extends LitElement {
  static styles = css`
    :host { display: flex; flex-direction: column; height: 100vh; overflow: hidden; }
    .stage { position: relative; flex: 1; min-height: 0; overflow: hidden; }
    .page { min-height: 100%; height: 100%; }
    .dialog { position: absolute; inset: 0 221px 0 134px; }
  `;

  render() {
    return html`
      <site-header></site-header>
      <div class="stage">
        <patient-page class="page"></patient-page>
        <encounter-dialog class="dialog" role="dialog" aria-label="Encounter"></encounter-dialog>
      </div>`;
  }
}
